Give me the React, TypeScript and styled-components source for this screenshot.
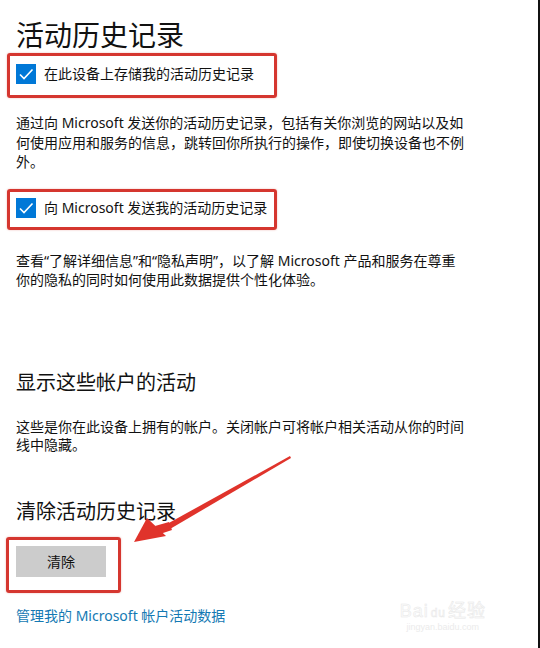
import styled, { createGlobalStyle } from 'styled-components';

const GlobalStyle = createGlobalStyle`
  html, body {
    margin: 0;
    padding: 0;
    background: #ffffff;
  }
  body {
    font-family: "Noto Sans", "Noto Sans CJK SC", sans-serif;
    color: #111;
  }
`;

const Check = () => (
  <CheckBox>
    <svg width="20" height="20" viewBox="0 0 20 20">
      <path d="M4 10.5 L8 14.5 L16.5 5.5" fill="none" stroke="#fff" strokeWidth="1.6" />
    </svg>
  </CheckBox>
);

const Arrow = () => (
  <ArrowSvg width="170" height="100" viewBox="0 0 170 100">
    <path d="M165 2 L166 4 L45 75 L42 70 Z" fill="#e0332b" />
    <path d="M9 88 L22 64 L41 82 Z" fill="#e0332b" />
    <path d="M30 72 L44 68 L47 76 L35 80 Z" fill="#e0332b" />
  </ArrowSvg>
);

const App = () => {
  return (
    <Page>
      <GlobalStyle />
      <Title>活动历史记录</Title>

      <Highlight width={270} height={45}>
        <Check />
        <CheckLabel>在此设备上存储我的活动历史记录</CheckLabel>
      </Highlight>

      <Text top={15}>
        通过向 Microsoft 发送你的活动历史记录，包括有关你浏览的网站以及如何使用应用和服务的信息，跳转回你所执行的操作，即使切换设备也不例外。
      </Text>

      <Highlight width={270} height={41} top={17}>
        <Check />
        <CheckLabel>向 Microsoft 发送我的活动历史记录</CheckLabel>
      </Highlight>

      <Text top={21}>
        查看“了解详细信息”和“隐私声明”，以了解 Microsoft 产品和服务在尊重你的隐私的同时如何使用此数据提供个性化体验。
      </Text>

      <Heading top={79}>显示这些帐户的活动</Heading>

      <Text top={21} lh={18}>
        这些是你在此设备上拥有的帐户。关闭帐户可将帐户相关活动从你的时间线中隐藏。
      </Text>

      <ClearSection>
        <Heading top={0}>清除活动历史记录</Heading>
        <Arrow />
      </ClearSection>

      <ButtonFrame>
        <ClearButton>清除</ClearButton>
      </ButtonFrame>

      <ManageLink href="#">管理我的 Microsoft 帐户活动数据</ManageLink>

      <Watermark>
        <WatermarkLogo>Bai<Paw>du</Paw>经验</WatermarkLogo>
        <WatermarkUrl>jingyan.baidu.com</WatermarkUrl>
      </Watermark>
    </Page>
  );
};

export default App;

const Page = styled.div`
  position: relative;
  box-sizing: border-box;
  width: 540px;
  height: 648px;
  padding: 17px 0 0 16px;
  border-right: 2px solid #111;
  overflow: hidden;
`;

const Title = styled.h1`
  margin: 0;
  font-size: 28px;
  font-weight: 400;
  line-height: 36px;
  color: #111;
`;

const Highlight = styled.div<{ width: number; height: number; top?: number }>`
  display: flex;
  align-items: center;
  gap: 8px;
  box-sizing: border-box;
  width: ${p => p.width}px;
  height: ${p => p.height}px;
  margin: ${p => p.top ?? 0}px 0 0 -9px;
  padding: 0 0 3px 6px;
  border: 3px solid #d5362f;
  border-radius: 3px;
  box-shadow: 0 0 2px rgba(200, 40, 30, 0.35);
`;

const CheckBox = styled.span`
  display: flex;
  width: 20px;
  height: 20px;
  flex: none;
  background: #0078d7;
`;

const CheckLabel = styled.span`
  font-size: 14px;
  line-height: 20px;
  color: #111;
`;

const Text = styled.p<{ top: number; lh?: number }>`
  margin: ${p => p.top}px 0 0;
  width: 452px;
  font-size: 14px;
  line-height: ${p => p.lh ?? 19.5}px;
  color: #111;
`;

const Heading = styled.h2<{ top: number }>`
  margin: ${p => p.top}px 0 0;
  font-size: 20px;
  font-weight: 400;
  line-height: 28px;
  color: #111;
`;

const ClearSection = styled.div`
  position: relative;
  margin-top: 44px;
`;

const ArrowSvg = styled.svg`
  position: absolute;
  left: 109px;
  top: -44px;
`;

const ButtonFrame = styled.div`
  box-sizing: border-box;
  width: 115px;
  height: 56px;
  margin: 11px 0 0 -10px;
  padding: 6px 0 0 7px;
  border: 3px solid #d5362f;
  border-radius: 3px;
  box-shadow: 0 0 2px rgba(200, 40, 30, 0.35);
`;

const ClearButton = styled.button`
  width: 90px;
  height: 31px;
  padding: 0;
  border: none;
  background: #cccccc;
  font-family: "Noto Sans CJK SC", sans-serif;
  font-size: 14px;
  color: #111;
`;

const ManageLink = styled.a`
  display: block;
  margin-top: 13px;
  font-size: 14px;
  line-height: 20px;
  color: #1479b3;
  text-decoration: none;
`;

const Watermark = styled.div`
  position: absolute;
  right: 52px;
  bottom: 16px;
  display: flex;
  flex-direction: column;
  align-items: center;
  font-family: "Liberation Sans", "Noto Sans CJK SC", sans-serif;
`;

const WatermarkLogo = styled.div`
  font-size: 18px;
  font-weight: 400;
  letter-spacing: 1px;
  -webkit-text-stroke: 0.5px #e8e8e8;
  color: #fcfcfc;
`;

const Paw = styled.span`
  font-size: 12px;
  margin: 0 2px;
`;

const WatermarkUrl = styled.div`
  font-size: 9px;
  color: #ebebeb;
`;
